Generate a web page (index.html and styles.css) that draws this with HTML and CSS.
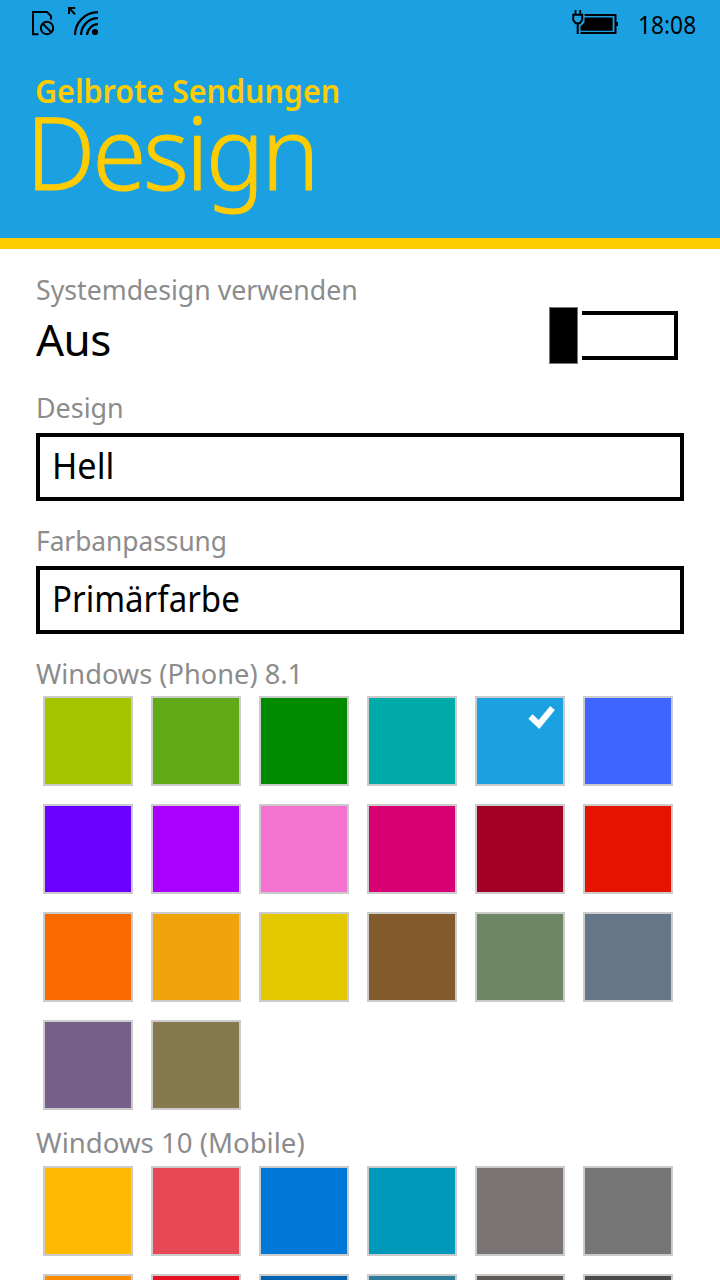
FILE: index.html
```html
<!DOCTYPE html>
<html lang="de">
<head>
<meta charset="utf-8">
<title>Gelbrote Sendungen – Design</title>
<link rel="stylesheet" href="styles.css">
</head>
<body>
<header class="header">
  <div class="status">
    <svg class="status-left" width="70" height="32" viewBox="0 0 70 32" fill="none" stroke="#000">
      <path d="M8.500 28.200H3V6h14l4 4V13.500" stroke-width="2"/>
      <circle cx="17" cy="22" r="6.200" stroke-width="2"/>
      <path d="M12.700 17.700l8.600 8.600" stroke-width="2"/>
      <path d="M39.500 2.500l5.500 5.700M39 8V2h6.200" stroke-width="2"/>
      <path d="M45 29A23 23 0 0 1 68 6.200M51 29a17 17 0 0 1 17-16.800M57 29a11.500 11.500 0 0 1 11-10.800" stroke-width="2.200"/>
      <circle cx="65" cy="26" r="3.100" fill="#000" stroke="none"/>
    </svg>
    <svg class="status-battery" width="48" height="28" viewBox="0 0 48 28" fill="none" stroke="#000">
      <path d="M5.500 2v4.500M10.200 2v4.500" stroke-width="1.800"/>
      <path d="M3.200 6.800h9v5.200l-2.500 3.200H5.700l-2.500-3.200z" stroke-width="2"/>
      <path d="M7.700 15v11M14.600 7H45.500v18H10.500" stroke-width="2"/>
      <path d="M14.600 9.500h28v13.200H10.500v-4.300l4-4z" fill="#000" stroke="none"/>
      <path d="M46 14h2v4h-2z" fill="#000" stroke="none"/>
    </svg>
    <time class="clock"><span class="fit fit-clock">18:08</span></time>
  </div>
  <div class="app-name"><span class="fit fit-app">Gelbrote Sendungen</span></div>
  <h1 class="title"><span class="fit fit-title">Design</span></h1>
</header>
<main class="content">
  <div class="label system-label"><span class="fit fit-system">Systemdesign verwenden</span></div>
  <div class="toggle-row">
    <span class="toggle-state">Aus</span>
    <div class="toggle"><div class="thumb"></div><div class="track"></div></div>
  </div>
  <div class="label design-label"><span class="fit fit-design">Design</span></div>
  <div class="select"><span class="fit fit-light">Hell</span></div>
  <div class="label accent-label"><span class="fit fit-accent">Farbanpassung</span></div>
  <div class="select"><span class="fit fit-primary">Primärfarbe</span></div>
  <div class="label phone-label"><span class="fit fit-phone">Windows (Phone) 8.1</span></div>
  <div class="palette">
    <i class="swatch lime"></i><i class="swatch green"></i><i class="swatch emerald"></i><i class="swatch teal"></i>
    <i class="swatch cyan"><svg class="check" width="28" height="24" viewBox="0 0 28 24"><path d="M2.500 11.500L11 19.500 24.500 3" fill="none" stroke="#fff" stroke-width="6"/></svg></i>
    <i class="swatch cobalt"></i>
    <i class="swatch indigo"></i><i class="swatch violet"></i><i class="swatch pink"></i><i class="swatch magenta"></i><i class="swatch crimson"></i><i class="swatch red"></i>
    <i class="swatch orange"></i><i class="swatch amber"></i><i class="swatch yellow"></i><i class="swatch brown"></i><i class="swatch olive"></i><i class="swatch steel"></i>
    <i class="swatch mauve"></i><i class="swatch taupe"></i>
  </div>
  <div class="label mobile-label"><span class="fit fit-mobile">Windows 10 (Mobile)</span></div>
  <div class="palette palette-cut">
    <i class="swatch gold"></i><i class="swatch coral"></i><i class="swatch blue"></i><i class="swatch aqua"></i><i class="swatch warm-gray"></i><i class="swatch gray"></i>
    <i class="swatch dark-orange"></i><i class="swatch bright-red"></i><i class="swatch navy"></i><i class="swatch dark-aqua"></i><i class="swatch dark-gray"></i><i class="swatch charcoal"></i>
  </div>
</main>
</body>
</html>
```
FILE: styles.css
```css
* { box-sizing: border-box; }
body {
  margin: 0;
  width: 720px;
  height: 1280px;
  overflow: hidden;
  background: #fff;
  color: #000;
  font-family: "Noto Sans", "Open Sans", sans-serif;
}
.header {
  height: 249px;
  background: #1ba1e2;
  border-bottom: 11px solid #ffcc00;
  color: #ffcc00;
}
.status { display: flex; height: 48px; padding: 0 25px 0 30px; color: #000; }
.status-left { margin-top: 6px; }
.status-battery { margin: 8px 20px 0 auto; }
.clock { width: 57px; font-size: 25px; line-height: 48px; white-space: nowrap; }
.app-name { height: 52px; padding: 21px 0 0 35px; font-size: 32px; line-height: 44px; font-weight: 600; }
.title { margin: 0; padding-left: 26px; font-size: 102px; line-height: 101px; font-weight: 300; -webkit-text-stroke: 1px #ffcc00; letter-spacing: -3px; }
.content { padding: 0 36px; }
.label { color: #8c8c8c; font-size: 28px; line-height: 40px; font-weight: 370; white-space: nowrap; }

/* Horizontal condensing of the wide fallback face */
.fit { display: inline-block; transform-origin: 0 50%; white-space: nowrap; }
.fit-clock { transform: scaleX(0.91); }
.fit-app { transform: scaleX(0.951); }
.fit-title { transform: scaleX(0.955); }
.fit-system { transform: scaleX(0.953); }
.fit-design { transform: scaleX(0.96); }
.fit-light { transform: scaleX(0.95); }
.fit-accent { transform: scaleX(0.938); }
.fit-primary { transform: scaleX(0.918); }
.fit-phone { transform: scaleX(0.972); }
.fit-mobile { transform: scaleX(0.985); }

.system-label { padding-top: 20px; height: 57px; }
.toggle-row { display: flex; justify-content: space-between; height: 77px; }
.toggle-state { font-size: 44px; line-height: 66px; letter-spacing: -0.500px; }
.toggle { display: flex; align-items: center; gap: 4px; width: 135px; height: 58px; }
.thumb { width: 29px; height: 57px; background: #000; border: 1px solid #777; }
.track { width: 96px; height: 49px; border: 4px solid #000; border-left: 0; }
.design-label { padding-top: 4px; height: 50px; }
.select { height: 68px; border: 4px solid #000; padding-left: 12px; font-size: 36px; line-height: 58px; }
.accent-label { height: 65px; padding-top: 19px; }
.phone-label { height: 62px; padding-top: 19px; }
.palette { display: grid; grid-template-columns: repeat(6, 90px); gap: 18px; padding-left: 7px; }
.palette-cut { height: 114px; overflow: hidden; }
.swatch { display: block; position: relative; height: 90px; border: 2px solid #cbcbcb; }
.check { position: absolute; right: 7px; top: 7px; }
.mobile-label { height: 56px; padding-top: 12px; }
.lime { background: #a4c400; }
.green { background: #60a917; }
.emerald { background: #008a00; }
.teal { background: #00aba9; }
.cyan { background: #1ba1e2; }
.cobalt { background: #3e65ff; }
.indigo { background: #6a00ff; }
.violet { background: #aa00ff; }
.pink { background: #f472d0; }
.magenta { background: #d80073; }
.crimson { background: #a20025; }
.red { background: #e51400; }
.orange { background: #fa6800; }
.amber { background: #f0a30a; }
.yellow { background: #e3c800; }
.brown { background: #825a2c; }
.olive { background: #6d8764; }
.steel { background: #647687; }
.mauve { background: #76608a; }
.taupe { background: #87794e; }
.gold { background: #ffb900; }
.coral { background: #e74856; }
.blue { background: #0078d7; }
.aqua { background: #0099bc; }
.warm-gray { background: #7a7574; }
.gray { background: #767676; }
.dark-orange { background: #ff8c00; }
.bright-red { background: #e81123; }
.navy { background: #0063b1; }
.dark-aqua { background: #2d7d9a; }
.dark-gray { background: #5d5a58; }
.charcoal { background: #4c4a48; }
```
